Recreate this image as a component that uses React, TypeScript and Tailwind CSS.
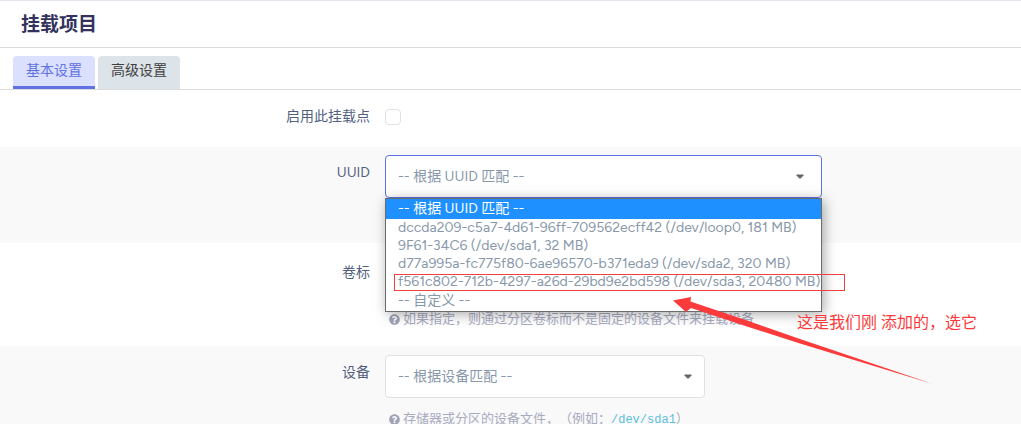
import React, { useState } from "react";

const UUID_OPTIONS = [
  "-- 根据 UUID 匹配 --",
  "dccda209-c5a7-4d61-96ff-709562ecff42 (/dev/loop0, 181 MB)",
  "9F61-34C6 (/dev/sda1, 32 MB)",
  "d77a995a-fc775f80-6ae96570-b371eda9 (/dev/sda2, 320 MB)",
  "f561c802-712b-4297-a26d-29bd9e2bd598 (/dev/sda3, 20480 MB)",
  "-- 自定义 --",
];

function Caret({ className }: { className: string }) {
  return (
    <svg
      className={`pointer-events-none col-start-1 row-start-1 h-[5px] w-2 self-center justify-self-end ${className}`}
      viewBox="0 0 8 5"
      aria-hidden="true"
    >
      <path d="M0.500 0.500h7v1L4.600 4.500H3.400L0.500 1.500z" fill="#666" />
    </svg>
  );
}

function HelpIcon() {
  return (
    <svg className="h-[11px] w-[11px] shrink-0" viewBox="0 0 512 512" fill="#a0a3b8" aria-hidden="true">
      <path d="M504 256c0 137-111 248-248 248S8 393 8 256 119 8 256 8s248 111 248 248zM262.700 90c-54.500 0-89.300 23-116.500 63.800-3.500 5.300-2.400 12.400 2.700 16.300l34.700 26.300c5.200 3.900 12.600 3 16.700-2.100 17.900-22.700 30.100-35.800 57.300-35.800 20.400 0 45.700 13.100 45.700 33 0 15-12.400 22.700-32.500 34C247.100 238.500 216 254.900 216 296v4c0 6.600 5.400 12 12 12h56c6.600 0 12-5.400 12-12v-1.300c0-28.500 83.200-29.600 83.200-106.700 0-58-60.200-102-116.500-102zM256 338c-25.400 0-46 20.600-46 46s20.600 46 46 46 46-20.600 46-46-20.600-46-46-46z" />
    </svg>
  );
}

function Help({ children }: { children: React.ReactNode }) {
  return (
    <p className="mt-[11px] flex items-center gap-[3px] pl-1 text-[13px] leading-5 whitespace-nowrap text-[#a8abbf] [text-spacing-trim:space-all]">
      <HelpIcon />
      <span>{children}</span>
    </p>
  );
}

type RowProps = { id: string; label: string; className: string; children: React.ReactNode };

function Row({ id, label, className, children }: RowProps) {
  return (
    <div className={`flex ${className}`}>
      <label htmlFor={id} className="w-[370px] shrink-0 pt-2 text-right text-sm leading-5 text-[#525f7f]">
        {label}
      </label>
      <div className="ml-[15px] min-w-0 flex-1">{children}</div>
    </div>
  );
}

const selectStyle =
  "col-start-1 row-start-1 h-[43px] w-full appearance-none rounded border bg-white px-3 text-sm text-[#8898aa] outline-none";

export default function App() {
  const [selected, setSelected] = useState(0);
  return (
    <main
      lang="zh-CN"
      className="border-t border-[#e6e6ef] bg-white font-['Google_Sans','Product_Sans','Figtree','Lato','Noto_Sans_CJK_SC',sans-serif]"
    >
      <h1 className="border-b border-[#dcdcdc] px-[21px] pt-[9px] pb-[7px] text-[19px] leading-[30px] font-bold text-[#32325d]">
        挂载项目
      </h1>
      <nav className="flex gap-[3px] border-b border-[#dcdcdc] px-[13px] pt-2 text-sm leading-5">
        <button type="button" className="h-[33px] rounded-t border-b-[3px] border-[#5e72e4] bg-[#dce0ff] px-[13px] text-[#5e72e4]">
          基本设置
        </button>
        <button type="button" className="h-[33px] rounded-t bg-[#dce3e9] px-[13px] pb-[3px] text-[#404040]">
          高级设置
        </button>
      </nav>

      <form>
        <Row id="enabled" label="启用此挂载点" className="h-[57px] pt-[9px]">
          <input
            id="enabled"
            type="checkbox"
            className="mt-[10px] block size-4 appearance-none rounded border border-[#dee2e6] bg-white checked:bg-[#5e72e4]"
          />
        </Row>

        <Row id="uuid" label="UUID" className="h-24 bg-[#f9f9f9] pt-2">
          <div className="relative w-[437px]">
            <div className="grid">
              <select
                id="uuid"
                value={selected}
                onChange={(e) => setSelected(Number(e.target.value))}
                className={`${selectStyle} border-[#5e72e4]`}
              >
                {UUID_OPTIONS.map((o, i) => (
                  <option key={o} value={i}>{o}</option>
                ))}
              </select>
              <Caret className="mr-[18px]" />
            </div>
            <ul role="listbox" aria-label="UUID" className="absolute top-full left-0 z-10 w-full border border-[#6b6b6b] bg-white text-sm shadow-[2px_2px_12px_rgba(0,0,0,0.35)]">
              {UUID_OPTIONS.map((o, i) => (
                <li
                  key={o}
                  role="option"
                  aria-selected={i === selected}
                  onClick={() => setSelected(i)}
                  className={`px-3 whitespace-nowrap ${i === 0 || i === 5 ? "h-5 leading-5" : "h-[18px] leading-[18px]"} ${
                    i === selected ? "bg-[#1e90ff] text-white" : "text-[#8898aa]"
                  }`}
                >
                  {o}
                </li>
              ))}
            </ul>
            <div className="absolute top-[119px] left-[9px] z-20 h-[17px] w-[451px] border border-[#f04040]" />
            <svg className="absolute top-[139px] left-[286px] z-20 h-[92px] w-[264px]" viewBox="0 0 264 92" aria-hidden="true">
              <path d="M2 6.500L20 3L19.500 7.500L79 27.500L129 45L262 90L129 49.500L79 33.500L20 14L15 18Z" fill="#fb3b3b" />
            </svg>
            <p className="absolute top-[156px] left-[412px] z-20 text-base leading-6 whitespace-nowrap text-[#fb3b3b]">
              这是我们刚 添加的，选它
            </p>
          </div>
        </Row>

        <Row id="volume" label="卷标" className="h-[103px] pt-3">
          <div className="grid w-80">
            <select id="volume" className={`${selectStyle} border-[#dee2e6]`} />
            <Caret className="mr-[13px]" />
          </div>
          <Help>如果指定，则通过分区卷标而不是固定的设备文件来挂载设备</Help>
        </Row>

        <Row id="device" label="设备" className="bg-[#f9f9f9] pt-[9px]">
          <div className="grid w-80">
            <select id="device" className={`${selectStyle} border-[#dee2e6]`}>
              <option>-- 根据设备匹配 --</option>
            </select>
            <Caret className="mr-[13px]" />
          </div>
          <Help>
            存储器或分区的设备文件，（例如：
            <code className="font-['Liberation_Mono',monospace] text-xs text-[#5bc0de]">/dev/sda1</code>）
          </Help>
        </Row>
      </form>
    </main>
  );
}
